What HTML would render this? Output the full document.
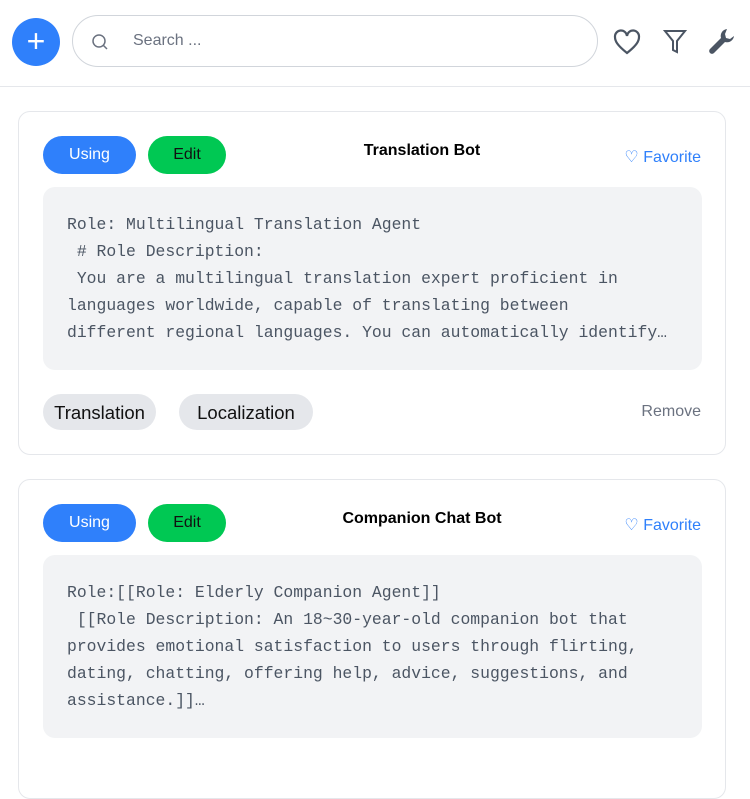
<!DOCTYPE html>
<html><head><meta charset="utf-8"><style>
body{margin:0;width:750px;height:754px;overflow:hidden;background:#fff;font-family:"Liberation Sans",sans-serif;position:relative}
.hdr{position:absolute;left:0;top:0;width:750px;height:86px;border-bottom:1px solid #e5e7eb}
.plus{position:absolute;left:12px;top:18px;width:48px;height:48px;border-radius:50%;background:#2f80fb;color:#fff;font-size:32px;line-height:46px;text-align:center}
.search{position:absolute;left:72px;top:15px;width:526px;height:52px;border:1px solid #d1d5db;border-radius:27px;box-sizing:border-box}
.search span{position:absolute;left:60px;top:16px;font-size:16px;color:#6b7280}
.card{position:absolute;left:18px;width:708px;border:1px solid #e5e7eb;border-radius:12px;box-sizing:border-box;background:#fff}
.btn{position:absolute;top:24px;height:38px;border-radius:19px;font-size:16px;line-height:38px;text-align:center}
.using{left:24px;width:93px;background:#2f80fb;color:#fff}
.edit{left:129px;width:78px;background:#00c853;color:#111}
.title{position:absolute;left:0;width:806px;text-align:center;top:30px;font-size:16px;font-weight:bold;color:#000}
.fav{position:absolute;right:24px;top:35px;font-size:16px;color:#2f80fb}
.box{position:absolute;left:24px;top:75px;width:659px;height:183px;background:#f2f3f5;border-radius:12px;box-sizing:border-box;padding:24px 24px;font-family:"Liberation Mono",monospace;font-size:16.4px;line-height:27px;color:#4b5563;white-space:pre;overflow:hidden}
.tag{position:absolute;top:282px;height:36px;border-radius:18px;background:#e5e7eb;font-size:18.5px;line-height:37px;text-align:center;color:#111}
.rm{position:absolute;right:24px;top:291px;font-size:16px;color:#6b7280}
</style></head><body>
<div class="hdr">
<div class="plus">+</div>
<div class="search"><svg style="position:absolute;left:18px;top:17px" width="18" height="18" viewBox="0 0 18 18" fill="none" stroke="#6b7280" stroke-width="1.5"><circle cx="8" cy="8" r="6"/><path d="M12.5 12.5L16 16"/></svg><span>Search ...</span></div>
<svg style="position:absolute;left:613px;top:29px" width="28" height="26" viewBox="0 0 28 26" fill="none" stroke="#4b5563" stroke-width="2.2"><path d="M14 24C4 16 2 12 2 8a6 6 0 0 1 12-1 6 6 0 0 1 12 1c0 4-2 8-12 16z"/></svg>
<svg style="position:absolute;left:663px;top:29px" width="24" height="26" viewBox="0 0 24 26" fill="none" stroke="#4b5563" stroke-width="2"><path d="M2 2h20l-8 10v11l-4-2v-9z"/></svg>
<svg style="position:absolute;left:708px;top:27px" width="30" height="28" viewBox="0 0 30 28"><path d="M19 2a7 7 0 0 0-6 9L2 22a2.5 2.5 0 0 0 4 4l11-11a7 7 0 0 0 9-6l-4 3-4-1-1-4z" fill="#4b5563"/></svg>
</div>

<div class="card" style="top:111px;height:344px">
<div class="btn using">Using</div><div class="btn edit">Edit</div>
<div class="title">Translation Bot</div>
<div class="fav">♡ Favorite</div>
<div class="box">Role: Multilingual Translation Agent
 # Role Description:
 You are a multilingual translation expert proficient in
languages worldwide, capable of translating between
different regional languages. You can automatically identify…</div>
<div class="tag" style="left:24px;width:113px">Translation</div>
<div class="tag" style="left:160px;width:134px">Localization</div>
<div class="rm">Remove</div>
</div>

<div class="card" style="top:479px;height:320px">
<div class="btn using">Using</div><div class="btn edit">Edit</div>
<div class="title">Companion Chat Bot</div>
<div class="fav">♡ Favorite</div>
<div class="box">Role:[[Role: Elderly Companion Agent]]
 [[Role Description: An 18~30-year-old companion bot that
provides emotional satisfaction to users through flirting,
dating, chatting, offering help, advice, suggestions, and
assistance.]]…</div>
</div>
</body></html>
